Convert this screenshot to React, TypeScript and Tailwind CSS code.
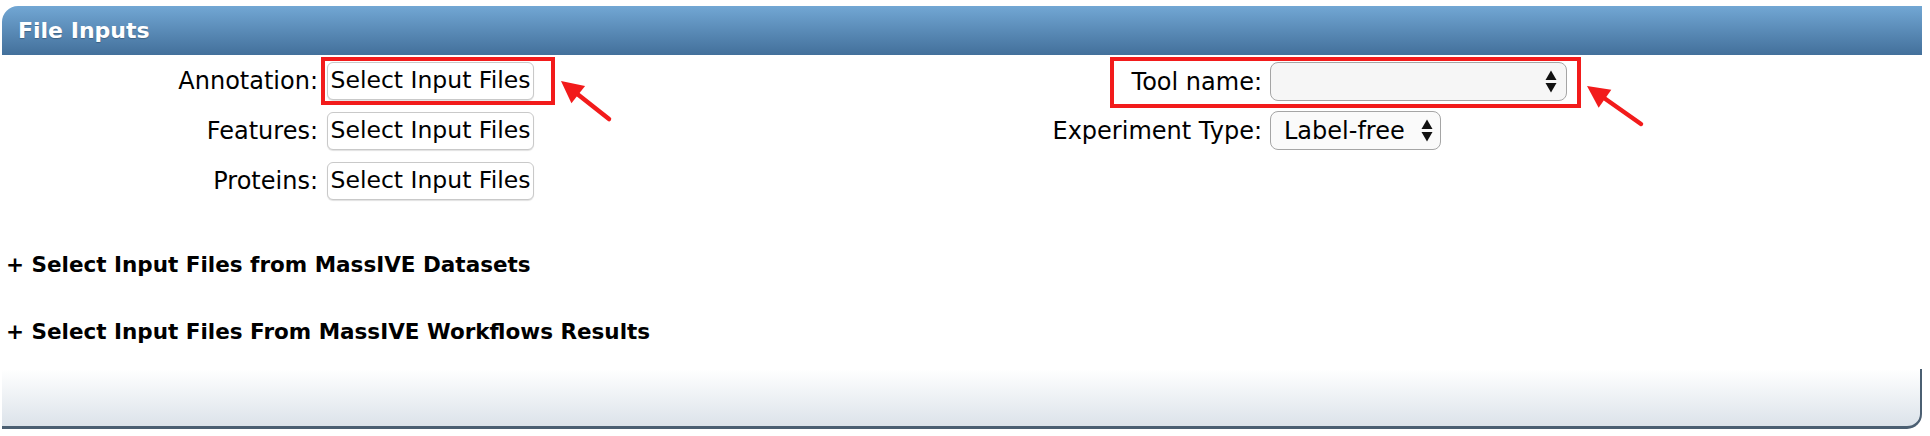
import React from "react";

const font = { fontFamily: '"DejaVu Sans", Verdana, sans-serif' };

function UpDown() {
  return (
    <svg width="12" height="23" viewBox="0 0 12 23" className="shrink-0">
      <path d="M6 0.5 L11.5 10 L0.5 10 Z" fill="#111" />
      <path d="M6 22.5 L11.5 13 L0.5 13 Z" fill="#111" />
    </svg>
  );
}

function FileButton() {
  return (
    <button className="h-[38px] w-[207px] rounded-[6px] border border-[#c9c9c9] bg-white px-0 text-[23.5px] leading-none text-black shadow-[0_1px_1px_rgba(0,0,0,0.12)] whitespace-nowrap">
      Select Input Files
    </button>
  );
}

function Arrow({ x1, y1, x2, y2 }: { x1: number; y1: number; x2: number; y2: number }) {
  const dx = x2 - x1;
  const dy = y2 - y1;
  const len = Math.hypot(dx, dy);
  const ux = dx / len;
  const uy = dy / len;
  const hl = 22;
  const hw = 11;
  const bx = x2 - ux * hl;
  const by = y2 - uy * hl;
  const p1 = `${bx - uy * hw},${by + ux * hw}`;
  const p2 = `${bx + uy * hw},${by - ux * hw}`;
  return (
    <g>
      <line x1={x1} y1={y1} x2={bx + ux * 2} y2={by + uy * 2} stroke="#f21b1b" strokeWidth="4.5" strokeLinecap="round" />
      <polygon points={`${x2},${y2} ${p1} ${p2}`} fill="#f21b1b" />
    </g>
  );
}

export default function App() {
  return (
    <div className="relative h-[436px] w-[1930px] bg-white pt-[6px]" style={font}>
      <div className="ml-[2px] w-[1920px]">
        {/* Header */}
        <div className="flex h-[49px] items-center rounded-tl-[16px] bg-gradient-to-b from-[#72a7d4] to-[#43709b] pl-[16px]">
          <span className="text-[22px] font-bold text-white [text-shadow:0_1px_1px_rgba(0,0,0,0.25)]">File Inputs</span>
        </div>

        {/* Body */}
        <div className="h-[314px] bg-white text-[24px] text-black">
          <div className="flex pt-[7px]">
            <div className="grid w-[1000px] flex-none grid-cols-[316px_auto] items-center gap-x-[9px] gap-y-[12px] self-start">
              <span className="text-right leading-none">Annotation:</span>
              <div><FileButton /></div>
              <span className="text-right leading-none">Features:</span>
              <div><FileButton /></div>
              <span className="text-right leading-none">Proteins:</span>
              <div><FileButton /></div>
            </div>
            <div className="grid grid-cols-[260px_auto] items-center gap-x-[8px] gap-y-[10px] self-start">
              <span className="text-right leading-none">Tool name:</span>
              <div className="flex h-[39px] w-[297px] items-center justify-end rounded-[8px] border-[1.5px] border-[#a5a5a5] bg-[#f6f6f6] pr-[9px]">
                <UpDown />
              </div>
              <span className="text-right leading-none">Experiment Type:</span>
              <div className="flex h-[39px] w-[171px] items-center justify-between rounded-[8px] border-[1.5px] border-[#a5a5a5] bg-[#fafafa] pl-[13px] pr-[7px]">
                <span className="leading-none">Label-free</span>
                <UpDown />
              </div>
            </div>
          </div>

          <div className="mt-[54px] pl-[4px] text-[21.5px] font-bold leading-none">+ Select Input Files from MassIVE Datasets</div>
          <div className="mt-[45px] pl-[4px] text-[21.5px] font-bold leading-none">+ Select Input Files From MassIVE Workflows Results</div>
        </div>

        {/* Footer */}
        <div className="h-[60px] rounded-br-[15px] border-r-[2px] border-b-[3px] border-[#4b5f72] bg-gradient-to-b from-white to-[#dce3ea]" />
      </div>

      {/* Red annotation boxes */}
      <div className="pointer-events-none absolute left-[321px] top-[57px] h-[48px] w-[234px] border-[4px] border-[#f21b1b]" />
      <div className="pointer-events-none absolute left-[1110px] top-[57px] h-[51px] w-[471px] border-[4px] border-[#f21b1b]" />

      <svg className="pointer-events-none absolute left-0 top-0" width="1930" height="436">
        <Arrow x1={609} y1={119} x2={561} y2={81} />
        <Arrow x1={1641} y1={124} x2={1587} y2={86} />
      </svg>
    </div>
  );
}
